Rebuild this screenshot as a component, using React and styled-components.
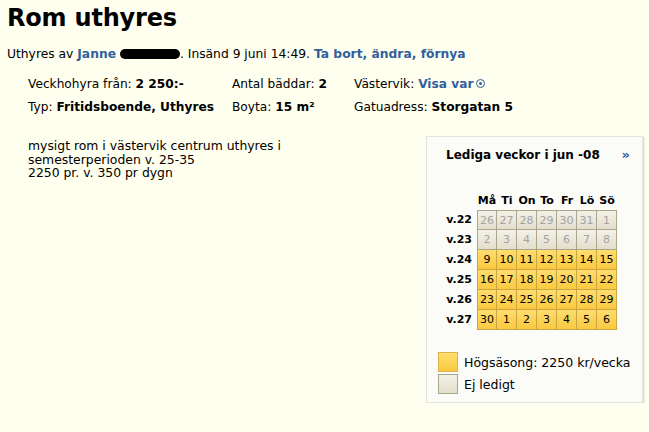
import styled, { createGlobalStyle } from 'styled-components'

const Global = createGlobalStyle`
  html, body { margin: 0; padding: 0; background: #ffffef; }
  body { font-family: "DejaVu Sans", Verdana, sans-serif; color: #000; }
`

const Page = styled.div`
  padding: 4px 6px 0 7px;
`

const Title = styled.h1`
  margin: 0;
  font-size: 24px;
  line-height: 28px;
  font-weight: bold;
  letter-spacing: -0.2px;
`

const Meta = styled.p`
  margin: 14px 0 0;
  font-size: 12.3px;
  line-height: 16px;
`

const A = styled.a`
  color: #31609c;
  font-weight: bold;
  text-decoration: none;
`

const Blackout = styled.span`
  display: inline-block;
  width: 60px;
  height: 10px;
  background: #000;
  border-radius: 5px;
  vertical-align: -1px;
`

const Facts = styled.div`
  display: grid;
  grid-template-columns: 204px 122px auto;
  row-gap: 7px;
  margin: 14px 0 0 21px;
  font-size: 12.2px;
  line-height: 16px;
`

const B = styled.b``

const Dot = styled.span`
  display: inline-block;
  width: 7px;
  height: 7px;
  border: 1.5px solid #31609c;
  border-radius: 50%;
  margin-left: 3px;
  position: relative;
  vertical-align: 0;
  &::after {
    content: '';
    position: absolute;
    left: 2px;
    top: 2px;
    width: 3px;
    height: 3px;
    border-radius: 50%;
    background: #31609c;
  }
`

const Main = styled.div`
  display: flex;
  justify-content: space-between;
  align-items: flex-start;
  margin-top: 22px;
`

const Desc = styled.div`
  margin: 2px 0 0 21px;
  font-size: 12.4px;
  line-height: 13.5px;
  width: 280px;
`

const Panel = styled.div`
  width: 217px;
  height: 267px;
  margin-top: -1px;
  background: #fbfbf8;
  border: 1px solid #e4e4dc;
  box-shadow: 1px 1px 2px rgba(0, 0, 0, 0.18);
  box-sizing: border-box;
  padding: 10px 0 0;
`

const PanelHead = styled.div`
  display: flex;
  justify-content: space-between;
  align-items: center;
  padding: 0 12px 0 19px;
  font-size: 12px;
  font-weight: bold;
  line-height: 16px;
`

const Next = styled.span`
  color: #31609c;
  font-size: 13px;
`

const Cal = styled.div`
  display: grid;
  grid-template-columns: 50px repeat(7, 20px);
  grid-auto-rows: 20px;
  margin: 27px 0 0 0;
  font-size: 11px;
`

const DayHead = styled.div`
  font-weight: bold;
  text-align: center;
  line-height: 14px;
  height: 16px;
  align-self: end;
`

const Corner = styled.div`
  height: 16px;
`

const WeekLabel = styled.div`
  font-weight: bold;
  text-align: right;
  padding-right: 5px;
  line-height: 20px;
`

const Cell = styled.div`
  box-sizing: border-box;
  text-align: center;
  line-height: 19px;
  border-right: 1px solid ${p => (p.$free ? '#c9a641' : '#aaa68c')};
  border-bottom: 1px solid ${p => (p.$free ? '#c9a641' : '#aaa68c')};
  border-left: ${p => (p.$first ? `1px solid ${p.$free ? '#c9a641' : '#aaa68c'}` : 'none')};
  border-top: ${p => (p.$top ? '1px solid #aaa68c' : 'none')};
  color: ${p => (p.$free ? '#000' : '#a3a3a3')};
  background: ${p =>
    p.$free
      ? 'linear-gradient(#ffdd6e, #fac93f)'
      : 'linear-gradient(#f3f1e8, #e3dfcc)'};
`

const Legend = styled.div`
  margin: 22px 0 0 11px;
  display: flex;
  flex-direction: column;
  gap: 2px;
`

const LegendRow = styled.div`
  display: flex;
  align-items: center;
  gap: 6px;
  font-size: 12.5px;
`

const Swatch = styled.span`
  width: 20px;
  height: 20px;
  box-sizing: border-box;
  border: 1px solid ${p => (p.$free ? '#d9b550' : '#aaa68c')};
  background: ${p =>
    p.$free
      ? 'linear-gradient(#ffdd6e, #fac93f)'
      : 'linear-gradient(#f3f1e8, #e3dfcc)'};
`

const days = ['Må', 'Ti', 'On', 'To', 'Fr', 'Lö', 'Sö']
const weeks = [
  { w: 22, d: [26, 27, 28, 29, 30, 31, 1], free: false },
  { w: 23, d: [2, 3, 4, 5, 6, 7, 8], free: false },
  { w: 24, d: [9, 10, 11, 12, 13, 14, 15], free: true },
  { w: 25, d: [16, 17, 18, 19, 20, 21, 22], free: true },
  { w: 26, d: [23, 24, 25, 26, 27, 28, 29], free: true },
  { w: 27, d: [30, 1, 2, 3, 4, 5, 6], free: true },
]

export default function App() {
  return (
    <Page>
      <Global />
      <Title>Rom uthyres</Title>
      <Meta>
        Uthyres av <A href="#">Janne</A> <Blackout />. Insänd 9 juni 14:49.{' '}
        <A href="#">Ta bort, ändra, förnya</A>
      </Meta>
      <Facts>
        <div>Veckhohyra från: <B>2 250:-</B></div>
        <div>Antal bäddar: <B>2</B></div>
        <div>Västervik: <A href="#">Visa var</A><Dot /></div>
        <div>Typ: <B>Fritidsboende, Uthyres</B></div>
        <div>Boyta: <B>15 m²</B></div>
        <div>Gatuadress: <B>Storgatan 5</B></div>
      </Facts>
      <Main>
        <Desc>
          mysigt rom i västervik centrum uthyres i<br />
          semesterperioden v. 25-35<br />
          2250 pr. v. 350 pr dygn
        </Desc>
        <Panel>
          <PanelHead>
            <span>Lediga veckor i jun -08</span>
            <Next>»</Next>
          </PanelHead>
          <Cal>
            <Corner />
            {days.map(d => (
              <DayHead key={d}>{d}</DayHead>
            ))}
            {weeks.map((wk, ri) => [
              <WeekLabel key={'w' + wk.w}>v.{wk.w}</WeekLabel>,
              ...wk.d.map((n, i) => (
                <Cell
                  key={wk.w + '-' + i}
                  $free={wk.free}
                  $first={i === 0}
                  $top={ri === 0}
                >
                  {n}
                </Cell>
              )),
            ])}
          </Cal>
          <Legend>
            <LegendRow><Swatch $free />Högsäsong: 2250 kr/vecka</LegendRow>
            <LegendRow><Swatch />Ej ledigt</LegendRow>
          </Legend>
        </Panel>
      </Main>
    </Page>
  )
}
